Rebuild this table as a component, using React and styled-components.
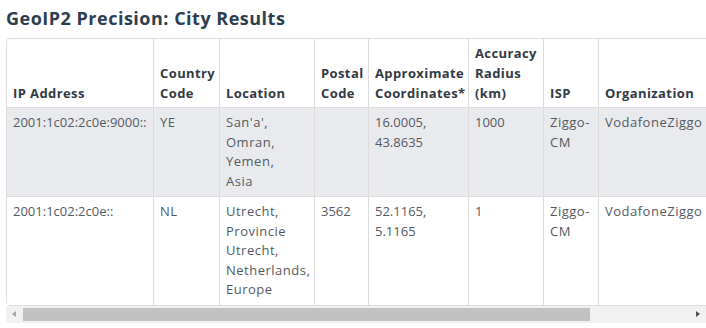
import React, { useRef, useState } from 'react';
import styled, { createGlobalStyle } from 'styled-components';

const GlobalStyle = createGlobalStyle`
  html, body {
    margin: 0;
    padding: 0;
    background: #ffffff;
  }
  body {
    font-family: "Open Sans", "Liberation Sans", sans-serif;
  }
`;

const TABLE_WIDTH = 822;
const VIEW_WIDTH = 700;
const BUTTON = 17;

const Page = styled.div`
  padding: 6px 0 0 6px;
  width: ${VIEW_WIDTH}px;
`;

const Title = styled.h2`
  margin: 0 0 8px;
  font-size: 18px;
  line-height: 24px;
  font-weight: 700;
  letter-spacing: 0.5px;
  color: #2c3e50;
`;

const ScrollArea = styled.div`
  width: ${VIEW_WIDTH}px;
  overflow: hidden;
`;

const ScrollBar = styled.div`
  display: flex;
  align-items: stretch;
  width: ${VIEW_WIDTH}px;
  height: 17px;
  background: #f1f1f1;
`;

const ScrollButton = styled.button`
  flex: 0 0 ${BUTTON}px;
  display: flex;
  align-items: center;
  justify-content: ${(p) => (p.$dir === 'left' ? 'flex-start' : 'flex-end')};
  padding: ${(p) => (p.$dir === 'left' ? '0 0 0 6px' : '0 6px 0 0')};
  margin: 0;
  border: none;
  background: #f1f1f1;
  cursor: default;
`;

const Arrow = styled.span`
  width: 0;
  height: 0;
  border-top: 3.5px solid transparent;
  border-bottom: 3.5px solid transparent;
  ${(p) =>
    p.$dir === 'left'
      ? `border-right: 4px solid ${p.$disabled ? '#a3a3a3' : '#505050'};`
      : `border-left: 4px solid ${p.$disabled ? '#a3a3a3' : '#505050'};`}
`;

const Track = styled.div`
  flex: 1;
  display: flex;
  align-items: center;
`;

const Thumb = styled.div`
  height: 13px;
  background: #c1c1c1;
`;

const Table = styled.table`
  width: ${TABLE_WIDTH}px;
  table-layout: fixed;
  border-collapse: separate;
  border-spacing: 0;
  border: 1px solid #dddddd;
  border-radius: 4px;
  font-size: 13px;
`;

const HeadCell = styled.th`
  text-align: left;
  vertical-align: bottom;
  padding: 4px 6px;
  line-height: 20px;
  font-weight: 700;
  letter-spacing: 0.4px;
  color: #333a44;
  border-left: ${(p) => (p.$first ? 'none' : '1px solid #dddddd')};
`;

const Row = styled.tr`
  background: ${(p) => (p.$shaded ? '#e8eaee' : '#ffffff')};
`;

const Cell = styled.td`
  vertical-align: top;
  padding: 5px 6px 5px;
  line-height: 19.5px;
  color: #555a62;
  letter-spacing: ${(p) => (p.$numeric ? '0' : '0.5px')};
  border-top: 1px solid #dddddd;
  border-left: ${(p) => (p.$first ? 'none' : '1px solid #dddddd')};
`;

const CellText = styled.span`
  display: block;
  width: min-content;
`;

const columns = [
  { label: 'IP Address', width: 146, numeric: true },
  { label: 'Country Code', width: 66 },
  { label: 'Location', width: 95 },
  { label: 'Postal Code', width: 54, numeric: true },
  { label: 'Approximate Coordinates*', width: 100, numeric: true },
  { label: 'Accuracy Radius (km)', width: 75, numeric: true },
  { label: 'ISP', width: 55 },
  { label: 'Organization', width: 115 },
  { label: 'Domain', width: 114 },
];

const rows = [
  ['2001:1c02:2c0e:9000::', 'YE', "San'a', Omran, Yemen, Asia", '', '16.0005, 43.8635', '1000', 'Ziggo-CM', 'VodafoneZiggo', 'ziggo.nl'],
  ['2001:1c02:2c0e::', 'NL', 'Utrecht, Provincie Utrecht, Netherlands, Europe', '3562', '52.1165, 5.1165', '1', 'Ziggo-CM', 'VodafoneZiggo', 'ziggo.nl'],
];

export default function App() {
  const areaRef = useRef(null);
  const [offset, setOffset] = useState(0);

  const maxOffset = TABLE_WIDTH - VIEW_WIDTH;
  const trackWidth = VIEW_WIDTH - BUTTON * 2;
  const thumbWidth = Math.round((trackWidth * VIEW_WIDTH) / TABLE_WIDTH);
  const thumbLeft = Math.round(((trackWidth - thumbWidth) * offset) / maxOffset);

  const scrollBy = (dx) => {
    const next = Math.max(0, Math.min(maxOffset, offset + dx));
    setOffset(next);
    if (areaRef.current) areaRef.current.scrollLeft = next;
  };

  return (
    <>
      <GlobalStyle />
      <Page>
        <Title>GeoIP2 Precision: City Results</Title>
        <ScrollArea ref={areaRef}>
          <Table>
            <colgroup>
              {columns.map((c) => (
                <col key={c.label} style={{ width: c.width }} />
              ))}
            </colgroup>
            <thead>
              <tr>
                {columns.map((c, i) => (
                  <HeadCell key={c.label} $first={i === 0}>{c.label}</HeadCell>
                ))}
              </tr>
            </thead>
            <tbody>
              {rows.map((r, ri) => (
                <Row key={ri} $shaded={ri === 0}>
                  {r.map((v, ci) => (
                    <Cell key={ci} $first={ci === 0} $numeric={columns[ci].numeric}>
                      <CellText>{v}</CellText>
                    </Cell>
                  ))}
                </Row>
              ))}
            </tbody>
          </Table>
        </ScrollArea>
        <ScrollBar>
          <ScrollButton $dir="left" onClick={() => scrollBy(-40)}>
            <Arrow $dir="left" $disabled={offset === 0} />
          </ScrollButton>
          <Track>
            <Thumb style={{ width: thumbWidth, marginLeft: thumbLeft }} />
          </Track>
          <ScrollButton $dir="right" onClick={() => scrollBy(40)}>
            <Arrow $dir="right" $disabled={offset === maxOffset} />
          </ScrollButton>
        </ScrollBar>
      </Page>
    </>
  );
}
